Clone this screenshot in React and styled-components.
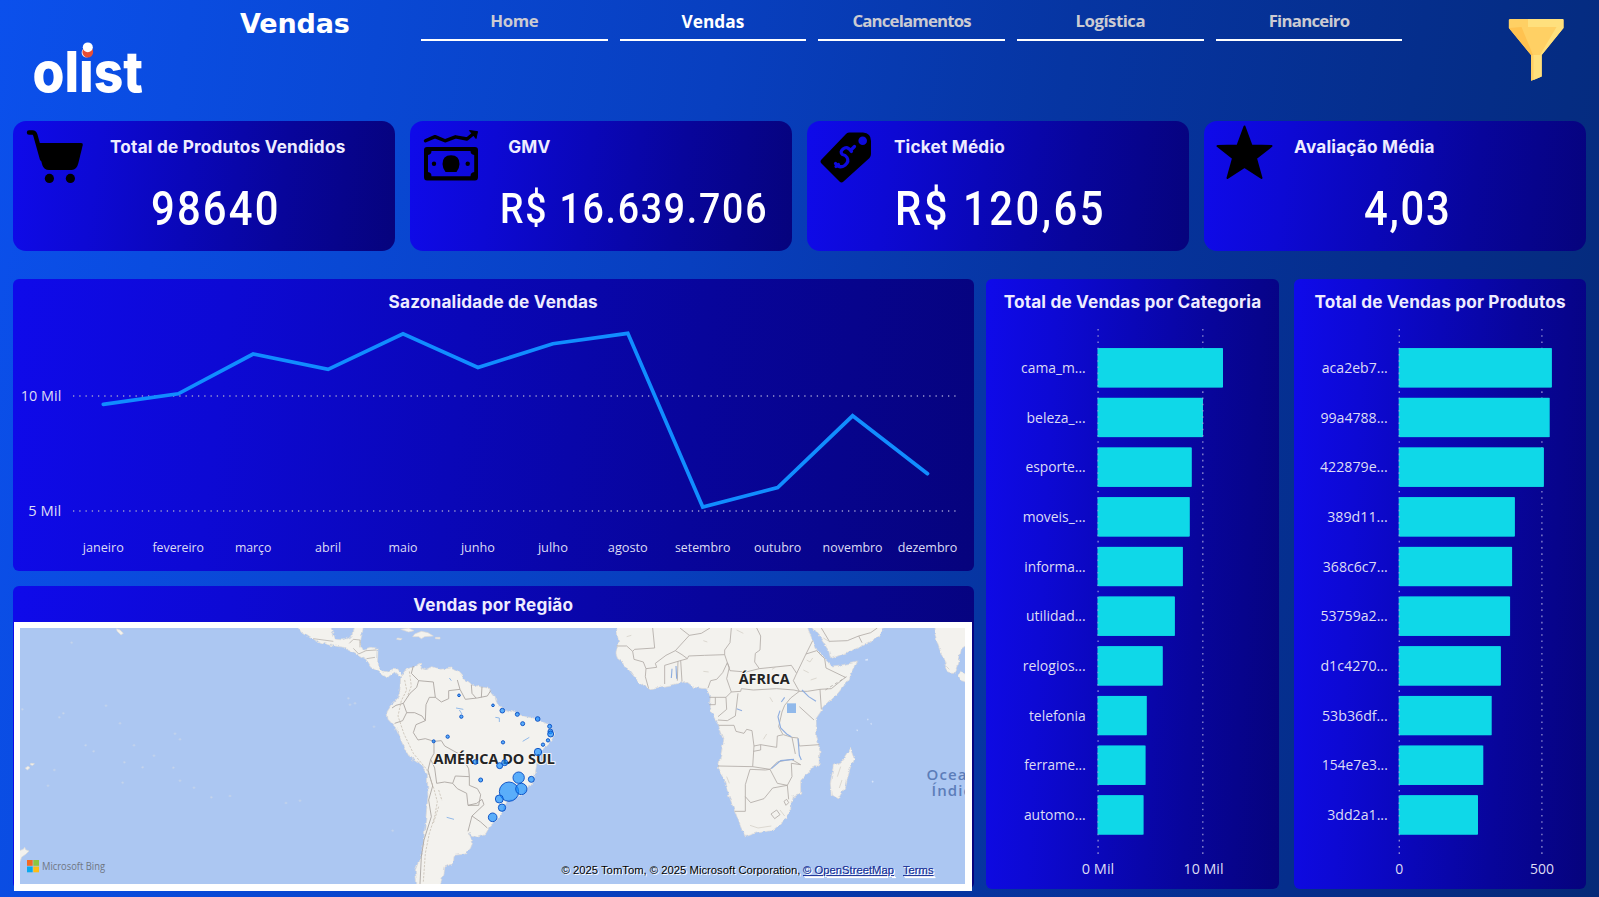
import React from "react";
import styled, { createGlobalStyle } from "styled-components";

const UI = '"Open Sans", "Noto Sans", sans-serif';
const panelFill = (angle) =>
  `linear-gradient(${angle}deg, #0f0aea 0%, #0d09d4 22%, #0a07b8 46%, #08059b 70%, #06037d 100%)`;

const GlobalStyle = createGlobalStyle`
  * { box-sizing: border-box; }
  body { margin: 0; overflow: hidden; }
`;

const Page = styled.div`
  width: 1599px;
  height: 897px;
  overflow: hidden;
  display: flex;
  flex-direction: column;
  padding: 0 12.5px;
  background: linear-gradient(99deg, #0b50ec 0%, #0948d4 22%, #083fbf 42%, #0635a2 62%, #052e8c 82%, #052a78 100%);
  font-family: ${UI};
  color: #fff;
`;

const Header = styled.header`
  height: 121px;
  display: flex;
  align-items: flex-start;
`;

const Logo = styled.svg`
  width: 130px;
  height: 70px;
  margin: 34px 0 0 12.5px;
  flex: none;
`;

const PageTitle = styled.h1`
  width: 180px;
  margin: 8px 0 0 85px;
  font: bold 27px/32px "DejaVu Sans", sans-serif;
  letter-spacing: -0.15px;
`;

const Nav = styled.nav`
  display: flex;
  gap: 12.2px;
  margin-left: 1px;
`;

const NavItem = styled.a`
  width: 186.5px;
  height: 41px;
  padding-top: ${(p) => (p.$active ? 10 : 9)}px;
  border-bottom: 2.4px solid #fff;
  text-align: center;
  font-weight: 700;
  font-size: ${(p) => (p.$active ? 17.3 : 16.8)}px;
  line-height: 24px;
  letter-spacing: ${(p) => p.$spacing ?? -0.45}px;
  color: ${(p) => (p.$active ? "#ffffff" : "#cbcbd2")};
`;

const FilterIcon = styled.svg`
  width: 56px;
  height: 64px;
  margin: 18px 0 0 106px;
`;

const Kpis = styled.section`
  display: flex;
  gap: 15.2px;
  height: 130px;
`;

const Card = styled.article`
  width: 382px;
  height: 130px;
  display: flex;
  border-radius: 13px;
  background: ${panelFill(97)};
`;

const CardIcon = styled.svg`
  width: 60px;
  height: 60px;
  margin: 4px 0 0 ${(p) => p.$left ?? 12}px;
  flex: none;
`;

const CardText = styled.div`
  flex: 1;
  padding-top: 15.5px;
`;

const CardTitle = styled.h2`
  margin: 0 0 0 ${(p) => p.$left}px;
  font: 650 17.2px/20px Inter, sans-serif;
  letter-spacing: 0.2px;
  color: #eeecff;
  white-space: nowrap;
`;

const CardValue = styled.div`
  margin: ${(p) => p.$top}px 0 0 ${(p) => p.$left}px;
  font: 500 ${(p) => p.$size}px/48px Roboto, sans-serif;
  letter-spacing: ${(p) => p.$spacing}px;
  white-space: nowrap;
  transform: scaleX(0.87);
  transform-origin: left;
`;

const Main = styled.main`
  display: flex;
  align-items: flex-start;
  margin-top: 28px;
`;

const LeftColumn = styled.div`
  width: 961.5px;
  display: flex;
  flex-direction: column;
  gap: 15px;
`;

const Panel = styled.section`
  width: ${(p) => p.$width}px;
  height: ${(p) => p.$height}px;
  margin-left: ${(p) => p.$gap || 0}px;
  border-radius: 6px;
  background: ${(p) => panelFill(p.$angle || 97)};
`;

const PanelTitle = styled.h2`
  height: ${(p) => p.$height}px;
  margin: 0;
  padding-top: ${(p) => p.$top}px;
  text-align: center;
  font: 650 17.2px/20px Inter, sans-serif;
  letter-spacing: 0.17px;
  color: #eeecff;
`;

const Chart = styled.svg`
  display: block;
  overflow: visible;
`;

const MapFrame = styled.div`
  height: 269px;
  margin: 0 2px 0 1.5px;
  padding: 6px 6px 7px;
  background: #fff;
`;

const MapSvg = styled.svg`
  display: block;
  width: 945px;
  height: 256px;
`;

const months = [
  ["janeiro", 404.3, 41], ["fevereiro", 393.8, 51.5], ["março", 354, 36.5], ["abril", 369.3, 26],
  ["maio", 333.8, 29], ["junho", 367.5, 34], ["julho", 343.7, 30], ["agosto", 333.3, 40],
  ["setembro", 507, 55.5], ["outubro", 487.5, 47.3], ["novembro", 415.8, 60], ["dezembro", 473.7, 59.5],
];

const categories = [
  ["cama_m...", 64.6, 125.5], ["beleza_...", 59.2, 105.5], ["esporte...", 60.2, 94.3],
  ["moveis_...", 63, 92.3], ["informa...", 61.4, 85.4], ["utilidad...", 59.8, 77.4],
  ["relogios...", 63, 65.3], ["telefonia", 56.8, 49.3], ["ferrame...", 61.4, 48.1], ["automo...", 61.8, 46.1],
];

const products = [
  ["aca2eb7...", 66, 153.2], ["99a4788...", 67.4, 151], ["422879e...", 67.8, 145.2],
  ["389d11...", 60.6, 116.2], ["368c6c7...", 65, 113.4], ["53759a2...", 67.4, 111.4],
  ["d1c4270...", 67.4, 102.2], ["53b36df...", 65.8, 93], ["154e7e3...", 66, 84.6], ["3dd2a1...", 60.6, 79.3],
];

const monthX = (i) => 102.8 + i * 74.93;

function SeasonChart() {
  return (
    <Chart width="961.5" height="254" viewBox="12.5 317 961.5 254" fontFamily={UI} fill="#dddcf4">
      {[396, 511].map((y) => (
        <line key={y} x1="72.5" x2="956" y1={y} y2={y} stroke="#9b99cf" strokeWidth="1.7" strokeDasharray="1.3 4.95" />
      ))}
      <text x="60.8" y="401" textAnchor="end" fontSize="15" textLength="40.5" lengthAdjust="spacingAndGlyphs">10 Mil</text>
      <text x="60.8" y="516" textAnchor="end" fontSize="15" textLength="33" lengthAdjust="spacingAndGlyphs">5 Mil</text>
      {months.map(([name, , w], i) => (
        <text key={name} x={monthX(i)} y="552" textAnchor="middle" fontSize="13.2" textLength={w} lengthAdjust="spacingAndGlyphs">
          {name}
        </text>
      ))}
      <polyline
        points={months.map(([, y], i) => `${monthX(i)},${y}`).join(" ")}
        fill="none" stroke="#118dff" strokeWidth="3.7" strokeLinecap="round" strokeLinejoin="miter"
      />
    </Chart>
  );
}

function BarChart({ left, origin, labelEnd, grid, rows, ticks }) {
  return (
    <Chart width="293" height="571" viewBox={`${left} 317 293 571`} fontFamily={UI} fill="#dddcf4" fontSize="15">
      {rows.map(([label, w, size], i) => (
        <React.Fragment key={label}>
          <rect x={origin} y={348.2 + i * 49.68} width={size} height="39.2" fill="#0fd8e8" />
          <text x={labelEnd} y={373 + i * 49.68} textAnchor="end" textLength={w} lengthAdjust="spacingAndGlyphs">{label}</text>
        </React.Fragment>
      ))}
      {[origin + 0.6, grid].map((x) => (
        <line key={x} x1={x} x2={x} y1="329" y2="857" stroke="#a6a4da" strokeOpacity="0.8" strokeWidth="1.4" strokeDasharray="1.6 4.63" />
      ))}
      {rows.map(([label, , size], i) => (
        <rect key={label} x={origin + 1.2} y={348.2 + i * 49.68} width={size - 2} height="39.2" fill="#0fd8e8" />
      ))}
      {ticks.map(([label, x, w]) => (
        <text key={label} x={x} y="874" textAnchor="middle" textLength={w} lengthAdjust="spacingAndGlyphs">{label}</text>
      ))}
    </Chart>
  );
}

const sales = [
  [267, 256, 4], [369, 286, 4], [397, 302, 7], [274, 320, 5], [442, 313, 6], [458, 341, 6], [503, 327, 7],
  [539, 349, 6], [541, 364, 7], [542, 372, 9], [534, 391, 5], [519, 404, 5], [233, 380, 5], [191, 394, 4.5],
  [399, 397, 5], [504, 426, 11], [316, 456, 7], [389, 467, 9], [404, 458, 9], [332, 510, 6], [446, 503, 17],
  [484, 508, 9], [417, 545, 29], [454, 537, 17], [388, 567, 12], [396, 593, 11], [368, 622, 13],
];

const islets = [
  [190, 400], [178, 412], [318, 377], [360, 430], [257, 496], [281, 514], [402, 496], [525, 461], [540, 478], [373, 547],
  [428, 562], [462, 527], [520, 563], [163, 570], [144, 617], [368, 608], [540, 602], [582, 623], [634, 652], [690, 648],
  [858, 669], [900, 662], [1045, 355], [1065, 370], [1050, 374], [1122, 440], [215, 188], [1178, 752], [67, 388],
];

function SalesMap() {
  return (
    <MapSvg viewBox="20 628 945 256">
      <defs>
        <filter id="coast" x="-5%" y="-5%" width="110%" height="110%">
          <feTurbulence type="fractalNoise" baseFrequency="0.05" numOctaves="3" seed="4" result="n" />
          <feDisplacementMap in="SourceGraphic" in2="n" scale="14" xChannelSelector="R" yChannelSelector="G" />
        </filter>
      </defs>
      <rect x="20" y="628" width="945" height="256" fill="#acc7f2" />

      <g transform="translate(0 580) scale(.33333)" fill="#f3f2ee" stroke="#e0dcd6" strokeWidth="2">
        <path filter="url(#coast)" d="M880 120L905 155L930 172L965 188L1000 198L1035 202L1065 218L1098 238L1112 262L1138 276L1160 292L1170 284L1186 276L1202 290L1208 286L1196 270L1178 268L1166 276L1148 272L1132 256L1134 205L1112 202L1090 208L1080 190L1092 130L1062 130L1056 168L1032 180L1006 178L988 130Z" />
        <path d="M350 146l10 4 10 10-7 5-12-12zM76 564l8-5 6 4-8 7zM92 550l11 1-4 5-7-1zM58 812l12-4 4-6 3 7 10 4-10 10-12 8-7 20z" />
        {islets.map(([x, y]) => <path key={`${x}-${y}`} d={`M${x - 4} ${y}l4 -3 4 3 -4 3z`} opacity=".35" />)}
      </g>
      <g transform="translate(0 580) scale(.33333)" fill="none" stroke="#aaa49f" strokeWidth="2">
        <path d="M1048 190L1060 178L1080 180L1080 202M1060 205L1076 222L1098 212L1130 210M1100 236L1125 232M940 176L1000 184" />
      </g>

      <g transform="translate(370 610) scale(.33333)">
        <g fill="#f3f2ee" stroke="#dedad4" strokeWidth="2">
          <path filter="url(#coast)" d="M92 205L108 180L132 170L152 158L150 174L168 180L188 170L215 178L242 174L264 186L278 202L304 222L330 230L358 236L374 256L382 282L400 298L424 304L450 316L480 322L515 334L540 346L553 368L543 392L526 410L508 430L500 462L494 502L474 540L448 558L412 572L400 598L384 626L358 650L344 674L322 682L296 670L308 694L302 714L286 732L252 736L250 762L222 770L218 796L208 840L142 840L136 780L152 740L162 690L166 640L174 560L172 490L152 464L122 444L98 402L76 352L54 328L51 306L64 286L82 266L90 240Z" />
          <path d="M92 58l24-4 16 8-16 4zM134 72l20-8 20 4 16 10-26 2-10 6-8-6-18 0zM82 84l14 2-4 4-12-2zM196 82l14 0 0 5-14-1z" />
        </g>
        <g fill="none" stroke="#a9a49f" strokeWidth="2.6" strokeLinejoin="round">
          <path d="M130 168L124 190L146 212L190 216L196 262L214 276L236 266L236 242L270 238L286 268L322 264L352 258L362 242M270 238L262 210M304 224L306 250L318 264M336 230L334 262M146 212L140 232L120 250L100 280L78 286L66 294M100 280L110 308L134 308L156 318L166 332L168 284L178 262L196 262M110 308L98 332L74 340M166 332L138 344L130 368L144 390L166 386L192 394M192 394L214 392L224 408L264 430L280 448L296 476L298 500L256 498L248 520L262 536L290 550L294 586L326 586L332 554L322 536L298 526L298 500M192 394L192 430L182 448L194 474L200 520L224 516L248 520M182 448L174 480L188 528L176 570L184 620L162 690L154 740L150 822M294 586L320 580L336 568M336 568L342 584L306 618L294 664M306 618L332 636L352 654" />
        </g>
        <g fill="none" stroke="#bdb4a6" strokeWidth="2.4" strokeDasharray="7 4" opacity=".8">
          <path d="M104 210L110 240L94 272L84 318L102 372L130 430L170 478L190 530L202 575L194 620L178 670L166 730L160 815M118 184L124 228L112 260M206 540L216 572M206 590L190 640" />
        </g>
        <path d="M258 294l22 4M268 300l8 12M376 322l12 2 0 12M458 394l20-12M230 622l22 6M238 204l6 8" stroke="#91b9e9" strokeWidth="3" fill="none" />
      </g>

      <g transform="translate(590 610) scale(.33333)">
        <g fill="#f3f2ee" stroke="#dedad4" strokeWidth="2">
          <path filter="url(#coast)" d="M78 40L86 100L78 126L82 148L106 166L126 192L152 222L176 238L216 230L258 222L288 214L312 232L346 236L362 256L358 290L370 322L386 346L402 386L394 430L385 470L402 512L418 560L438 612L452 650L466 680L502 668L548 662L582 632L602 596L606 562L632 552L632 512L658 482L687 462L690 422L680 380L678 326L702 290L742 252L777 208L802 156L762 164L728 168L702 142L682 122L668 92L648 40Z" />
          <path filter="url(#coast)" d="M655 40L692 85L716 122L722 146L770 128L830 102L868 78L886 40Z" />
          <path filter="url(#coast)" d="M1028 40L1042 100L1062 152L1076 190L1096 190L1106 160L1114 116L1140 98L1140 40ZM1112 184L1126 196L1130 216L1114 212L1106 198Z" />
          <path filter="url(#coast)" d="M782 415L792 442L778 482L766 532L746 566L724 556L721 520L730 466L756 456Z" />
        </g>
        <g fill="none" stroke="#b1aba6" strokeWidth="2.5" strokeLinejoin="round">
          <path d="M80 108L110 108L128 124L134 118L194 114L188 54M128 124L132 148L160 156L168 176L200 172L196 160L228 136L256 122L276 134L292 146L264 154L224 166L224 222M168 176L166 200L176 236M264 154L262 212M272 152L276 214M292 146L296 138L344 136L404 134L412 158L398 188L380 208L362 212L354 234M256 122L298 76L334 70L360 54M298 76L270 54M404 134L404 120L420 98L424 54M500 54L512 78L510 120L496 130L494 156L508 176L604 166L620 190L648 132L668 92M412 158L420 182L468 186L508 176M412 158L418 172L410 206L424 246L452 244L454 236L490 240L560 236L612 240L628 244L652 244L690 238L694 298M620 190L610 212L628 244M648 132L680 122L704 146L708 174L766 202L724 236L690 238M358 262L408 262L424 246M358 284L376 284L376 262M408 262L410 298L384 320M444 250L436 318L412 332L384 330M386 346L432 346L438 364L462 370L470 358L486 362L492 408L512 404L560 412L562 378L580 374L606 382L624 384L628 408L688 404M492 408L488 470L384 468M488 470L540 478L562 456L604 448L632 464M512 404L512 420L490 424M480 478L526 480L540 478L562 520L592 526L606 500L604 460L632 464M480 478L466 524L466 604L434 604M466 560L482 578L522 566L548 534L592 526L596 568M543 612L560 600L570 614L554 626ZM582 574l8-6 6 10-8 8zM628 290L672 330M628 244L602 264L584 286L576 306L566 350L578 372M606 382L616 432M694 54L718 94L772 92L806 78L816 98M806 78L842 68L862 54" />
          <path d="M706 240L770 200" strokeDasharray="9 8" />
        </g>
        <g fill="none" stroke="#c6c0b6" strokeWidth="2" opacity=".8">
          <path d="M440 60l20 10M340 92l12 4M546 178l10-6M110 80l14-4M340 184l16 2M540 262l8 14M530 372l-10 16M650 150l10 6 8-12M640 180l16 8M662 210l18-6M480 646l24 8 40-6M570 600l14 18M410 500l8 20M752 470l-10 30M756 510l-8 24M700 84l20 12M1070 170l8 8" />
        </g>
        <rect x="591" y="280" width="27" height="29" fill="#91b9ea" />
        <path d="M246 176l-2 28M258 168l2 38M584 262l-10 14M570 302l-6 18 8 34 18 18 14 8M624 386l4 50 6 14M636 240l20 20 22 14M544 476l28-24 40-4M440 296l16 6" stroke="#8faee0" strokeWidth="3.4" fill="none" />
        <path d="M800 362l3-2M832 328l3 1M826 150l8-1M846 516l4-2M842 342l3-1" stroke="#d8e4f8" strokeWidth="5" />
      </g>

      <g fontFamily={UI} fontWeight="700" fontSize="15" fill="#242424" stroke="#f8f7f4" strokeWidth="2" paintOrder="stroke" strokeLinejoin="round">
        <text x="433.5" y="764" textLength="121.5" lengthAdjust="spacingAndGlyphs">AMÉRICA DO SUL</text>
        <text x="738.7" y="684.3" textLength="51" lengthAdjust="spacingAndGlyphs">ÁFRICA</text>
      </g>
      <g fontFamily={UI} fontSize="15" fontWeight="600" fill="#5c7db9" letterSpacing="1.1">
        <text x="926.5" y="780">Oceano</text>
        <text x="931.5" y="796">Índico</text>
      </g>

      <g transform="translate(370 610) scale(.33333)" fill="#118dff" fillOpacity=".68" stroke="#0b50c4" strokeWidth="2.8">
        {sales.map(([x, y, r]) => <circle key={`${x}-${y}`} cx={x} cy={y} r={r} />)}
      </g>

      <rect x="27" y="860" width="5.7" height="5.8" fill="#f26a25" />
      <rect x="33.3" y="860" width="5.7" height="5.8" fill="#8cc63f" />
      <rect x="27" y="866.5" width="5.7" height="5.8" fill="#0aa9ee" />
      <rect x="33.3" y="866.5" width="5.7" height="5.8" fill="#fdbd13" />
      <text x="42" y="870" fontFamily={UI} fontSize="10.7" fontWeight="500" fill="#6f7682" textLength="63" lengthAdjust="spacingAndGlyphs">Microsoft Bing</text>

      <g fontFamily='"Liberation Sans", Arial, sans-serif' fontSize="11" fill="#000" style={{ textShadow: "1px 1px 0 #fff" }}>
        <text x="561.5" y="874" textLength="239" lengthAdjust="spacingAndGlyphs">© 2025 TomTom, © 2025 Microsoft Corporation,</text>
        <text x="803" y="874" fill="#243a9c" textDecoration="underline" textLength="91" lengthAdjust="spacingAndGlyphs">© OpenStreetMap</text>
        <text x="903" y="874" fill="#243a9c" textDecoration="underline" textLength="30.5" lengthAdjust="spacingAndGlyphs">Terms</text>
      </g>
    </MapSvg>
  );
}

const CartIcon = () => (
  <CardIcon $left={11} viewBox="0 0 60 60">
    <path d="M5 7.5H8.5Q10.5 7.5 11.3 10L18 34" fill="none" stroke="#000" strokeWidth="4.4" strokeLinecap="round" />
    <path d="M12.5 18H57Q59.2 18 58.7 20.2L54.4 38Q52.7 45 47.7 45H25Q20 45 18.3 40Z" />
    <circle cx="25.4" cy="53.4" r="4.6" /><circle cx="46.4" cy="53.4" r="4.6" />
  </CardIcon>
);

const MoneyIcon = () => (
  <CardIcon viewBox="0 0 60 60">
    <path d="M3.5 15.8L13 11.6L23 15.8L33.5 11.8L45 14L50.5 9.5" fill="none" stroke="#000" strokeWidth="3.4" strokeLinecap="round" strokeLinejoin="round" />
    <path d="M47.5 5.6L55.5 6.6L54 13.5Z" stroke="#000" />
    <path fillRule="evenodd" d="M5 22H53Q56 22 56 25V52Q56 55.5 53 55.5H5Q2 55.5 2 52V25Q2 22 5 22ZM9.5 26Q9.5 29.6 6 30V47Q9.5 47.4 9.5 51.2H48.5Q48.5 47.4 52.2 47V30Q48.5 29.6 48.5 26Z" />
    <path d="M23.5 47Q20.5 43 20.5 39Q20.5 30.2 29 30.2Q37.5 30.2 37.5 39Q37.5 43 34.5 47Z" />
    <circle cx="12" cy="38.8" r="2.2" /><circle cx="45.7" cy="38.8" r="2.2" />
  </CardIcon>
);

const TagIcon = () => (
  <CardIcon viewBox="0 0 60 60">
    <path fillRule="evenodd" d="M30 7.5H44Q52 8 52 16V29Q52 31 50.5 33L24.5 56.5Q22.5 58.5 20.5 56.5L2.5 38.5Q.5 36.5 2.5 34.5L27 9Q28 7.5 30 7.5ZM43.7 11.5A4.3 4.3 0 1 0 43.7 20.1A4.3 4.3 0 1 0 43.7 11.5Z" />
    <path d="M16.5 39.5Q20.5 45 26 41.2Q30.5 37.5 28 33.5Q26.5 31 23.5 30.5Q20.5 28 24 25Q28.5 21.5 32.5 27.5M17 42.5L19.5 40.5M32.5 25.5L35.5 22.5" transform="translate(0 -1)" fill="none" stroke="#0e09df" strokeWidth="3.2" strokeLinecap="round" />
  </CardIcon>
);

const StarIcon = () => (
  <CardIcon viewBox="0 0 60 60">
    <path d="M28.5 1.5L35.5 20.5L55.5 21L40 33.3L45.5 53L28.5 42L11.5 53L17 33.3L1.5 21L21.5 20.5Z" stroke="#000" strokeWidth="2" strokeLinejoin="round" />
  </CardIcon>
);

export default function App() {
  return (
    <Page>
      <GlobalStyle />
      <Header>
        <Logo viewBox="25 34 130 70">
          <text x="32.5" y="92.3" fontFamily="Inter, sans-serif" fontWeight="800" fontSize="56.5" fill="#fff" textLength="110.5" lengthAdjust="spacingAndGlyphs">olist</text>
          <ellipse cx="87.8" cy="52" rx="5.4" ry="5.5" fill="#e84e35" />
          <ellipse cx="87.8" cy="47.3" rx="5" ry="4.9" fill="#fff" />
        </Logo>
        <PageTitle>Vendas</PageTitle>
        <Nav>
          <NavItem $spacing={-0.45}>Home</NavItem>
          <NavItem $active $spacing={0}>Vendas</NavItem>
          <NavItem $spacing={-0.82}>Cancelamentos</NavItem>
          <NavItem $spacing={-0.5}>Logística</NavItem>
          <NavItem $spacing={-0.75}>Financeiro</NavItem>
        </Nav>
        <FilterIcon viewBox="1508 18 56 64">
          <path d="M1508.8 20Q1508.8 19 1510 19H1562.5Q1563.5 19 1563.5 20V28L1541.7 55V76.5L1531 81V55L1508.8 28Z" fill="#ffd064" />
          <path d="M1528 19H1562.5Q1563.5 19 1563.5 20V28L1541.7 55V76.5L1533.5 80V55H1540L1556.5 27H1528Z" fill="#ffe07d" />
          <path d="M1509 28L1521.5 27L1533 55H1531Z" fill="#ffc250" />
        </FilterIcon>
      </Header>

      <Kpis>
        <Card>
          <CartIcon />
          <CardText>
            <CardTitle $left={26.5}>Total de Produtos Vendidos</CardTitle>
            <CardValue $left={67} $top={28.5} $size={48} $spacing={2.5}>98640</CardValue>
          </CardText>
        </Card>
        <Card>
          <MoneyIcon />
          <CardText>
            <CardTitle $left={26.5}>GMV</CardTitle>
            <CardValue $left={18} $top={27.5} $size={43} $spacing={2.05}>R$ 16.639.706</CardValue>
          </CardText>
        </Card>
        <Card>
          <TagIcon />
          <CardText>
            <CardTitle $left={15}>Ticket Médio</CardTitle>
            <CardValue $left={16} $top={28.5} $size={48} $spacing={2.9}>R$ 120,65</CardValue>
          </CardText>
        </Card>
        <Card>
          <StarIcon />
          <CardText>
            <CardTitle $left={18}>Avaliação Média</CardTitle>
            <CardValue $left={87.5} $top={28.5} $size={48} $spacing={2}>4,03</CardValue>
          </CardText>
        </Card>
      </Kpis>

      <Main>
        <LeftColumn>
          <Panel $width={961.5} $height={292}>
            <PanelTitle $height={38} $top={12.5}>Sazonalidade de Vendas</PanelTitle>
            <SeasonChart />
          </Panel>
          <Panel $width={961.5} $height={303}>
            <PanelTitle $height={36} $top={9}>Vendas por Região</PanelTitle>
            <MapFrame><SalesMap /></MapFrame>
          </Panel>
        </LeftColumn>
        <Panel $width={293} $height={610} $gap={12} $angle={93}>
          <PanelTitle $height={38} $top={12.5}>Total de Vendas por Categoria</PanelTitle>
          <BarChart left={986} origin={1097.5} labelEnd={1085.7} grid={1202.8} rows={categories} ticks={[["0 Mil", 1098, 32.5], ["10 Mil", 1203.5, 40]]} />
        </Panel>
        <Panel $width={292.8} $height={610} $gap={14.7} $angle={93}>
          <PanelTitle $height={38} $top={12.5}>Total de Vendas por Produtos</PanelTitle>
          <BarChart left={1293.7} origin={1398.4} labelEnd={1387.5} grid={1541.6} rows={products} ticks={[["0", 1399, 8], ["500", 1541.8, 24]]} />
        </Panel>
      </Main>
    </Page>
  );
}
